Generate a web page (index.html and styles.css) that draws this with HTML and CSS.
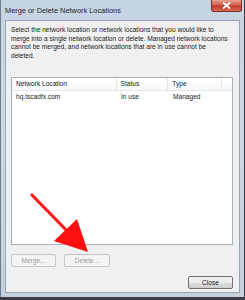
FILE: index.html
```html
<!DOCTYPE html>
<html>
<head>
<meta charset="utf-8">
<link rel="stylesheet" href="styles.css">
</head>
<body>
<div class="window">
  <div class="titlebar">
    <span class="title">Merge or Delete Network Locations</span>
    <div class="closebtn"><svg width="9" height="7" viewBox="0 0 9 7"><path d="M1 0.5 L8 6.5 M8 0.5 L1 6.5" stroke="#ffffff" stroke-width="1.8" fill="none"/></svg></div>
  </div>
  <div class="panel">
    <p class="desc">Select the network location or network locations that you would like to<br>merge into a single network location or delete. Managed network locations<br>cannot be merged, and network locations that are in use cannot be<br>deleted.</p>
    <div class="list">
      <div class="header">
        <div class="col c1">Network Location</div>
        <div class="col c2">Status</div>
        <div class="col c3">Type</div>
        <div class="col c4"></div>
      </div>
      <div class="row">
        <div class="col c1">hq.tscadfx.com</div>
        <div class="col c2">In use</div>
        <div class="col c3">Managed</div>
      </div>
    </div>
    <div class="actions">
      <div class="btn disabled">Merge...</div>
      <div class="btn disabled">Delete...</div>
    </div>
    <div class="footer">
      <div class="btn">Close</div>
    </div>
  </div>
  <svg class="arrow" width="245" height="300" viewBox="0 0 245 300">
    <line x1="32" y1="195" x2="70" y2="234" stroke="#ff1a1a" stroke-width="3.2" stroke-linecap="round"/>
    <polygon points="88,252 54,241 77,219" fill="#ff1010"/>
  </svg>
</div>
</body>
</html>
```
FILE: styles.css
```css
html, body {
  margin: 0;
  padding: 0;
}
body {
  width: 245px;
  height: 300px;
  background: #3a3d42;
  overflow: hidden;
  font-family: "Liberation Sans", Arial, sans-serif;
}
.window {
  position: relative;
  width: 244px;
  height: 297px;
  background: linear-gradient(#c6d3e1, #cbd8e6 40%, #c3d0de);
  border-left: 1px solid #6f7c8c;
  box-sizing: border-box;
  display: flex;
  flex-direction: column;
}
.titlebar {
  height: 20px;
  display: flex;
  align-items: flex-start;
  justify-content: space-between;
  flex: none;
}
.title {
  font-size: 7.4px;
  color: #1e1e1e;
  padding-left: 4px;
  padding-top: 6px;
}
.closebtn {
  width: 31px;
  height: 12px;
  margin-right: 2px;
  border: 1px solid #7a3030;
  border-top: none;
  border-radius: 0 0 3px 3px;
  background: linear-gradient(#e8a393, #d1604f 45%, #c0392b 55%, #d86a52);
  display: flex;
  align-items: center;
  justify-content: center;
  box-sizing: border-box;
}
.panel {
  margin-left: 4px;
  margin-right: 4px;
  height: 273px;
  background: #f0f0f0;
  border: 1px solid #97a3b2;
  box-sizing: border-box;
  padding: 5px 6px 0 5px;
  display: flex;
  flex-direction: column;
}
.desc {
  margin: 0;
  font-size: 6.6px;
  line-height: 8.7px;
  color: #1a1a1a;
  white-space: nowrap;
}
.list {
  margin-top: 16px;
  height: 168px;
  background: #ffffff;
  border: 1px solid #a9b0b8;
  box-sizing: border-box;
  font-size: 6.6px;
  color: #1a1a1a;
  flex: none;
}
.header {
  display: flex;
  height: 12px;
  border-bottom: 1px solid #e3e6ea;
  background: linear-gradient(#ffffff, #f6f7f9);
}
.row {
  display: flex;
  height: 12px;
}
.col {
  box-sizing: border-box;
  padding-left: 4px;
  display: flex;
  align-items: center;
}
.header .col {
  border-right: 1px solid #e2e5e9;
}
.c1 { width: 105px; }
.c2 { width: 52px; }
.c3 { width: 54px; }
.header .c4 { width: 10px; border-right: none; }
.actions {
  display: flex;
  gap: 8px;
  margin-top: 9px;
}
.btn {
  width: 45px;
  height: 13px;
  box-sizing: border-box;
  border: 1px solid #707070;
  border-radius: 2px;
  background: linear-gradient(#f2f2f2, #ebebeb 50%, #dddddd 51%, #cfcfcf);
  font-size: 6.6px;
  color: #1a1a1a;
  display: flex;
  align-items: center;
  justify-content: center;
}
.btn.disabled {
  border-color: #c6c6c6;
  background: #f4f4f4;
  color: #9c9c9c;
}
.actions .btn:nth-child(2) { width: 46px; }
.footer {
  display: flex;
  justify-content: flex-end;
  margin-top: 9px;
}
.arrow {
  position: absolute;
  left: -1px;
  top: 0;
}
```
